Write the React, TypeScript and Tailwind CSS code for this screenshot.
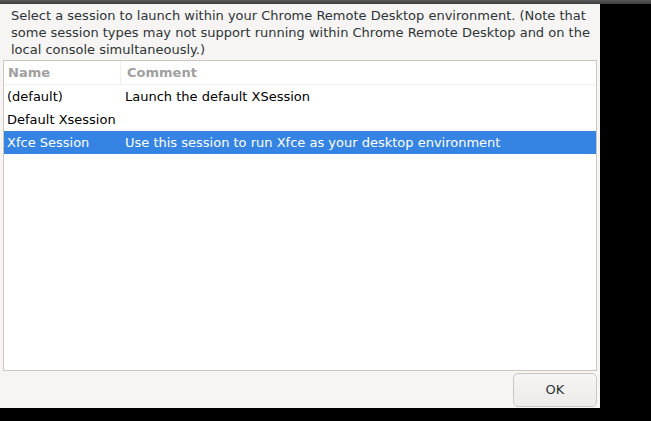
export default function App() {
  const rows = [
    { name: "(default)", comment: "Launch the default XSession", selected: false },
    { name: "Default Xsession", comment: "", selected: false },
    { name: "Xfce Session", comment: "Use this session to run Xfce as your desktop environment", selected: true },
  ];

  return (
    <div className="w-[651px] h-[421px] bg-black overflow-hidden flex flex-col font-['DejaVu_Sans',sans-serif] text-[13px] text-[#2e3436]">
      {/* title strip */}
      <div className="h-[4px] bg-gradient-to-b from-[#5a5a5a] to-[#3c3c3c] shrink-0" />
      <div className="w-[600px] h-[404px] bg-[#f6f5f4] flex flex-col">
        <p className="pl-[11px] pr-[2px] pt-[3px] leading-[17px] h-[56px] text-[#2e3436]">
          Select a session to launch within your Chrome Remote Desktop environment. (Note that some session types may not support running within Chrome Remote Desktop and on the local console simultaneously.)
        </p>
        <div className="mx-[3px] h-[311px] border border-[#cdc7c2] bg-white flex flex-col">
          <div className="flex h-[24px] items-center border-b border-[#f0efee] font-bold text-[#a0a0a0]">
            <div className="w-[117px] pl-[4px] h-full flex items-center border-r border-[#f0efee]">Name</div>
            <div className="pl-[6px]">Comment</div>
          </div>
          {rows.map((r) => (
            <div
              key={r.name}
              className={
                r.selected
                  ? "flex h-[23px] items-center bg-[#3584e4] text-white"
                  : "flex h-[23px] items-center text-black"
              }
            >
              <div className="w-[118px] pl-[3px] whitespace-nowrap">{r.name}</div>
              <div className="pl-[3px] whitespace-nowrap">{r.comment}</div>
            </div>
          ))}
        </div>
        <div className="flex justify-end pr-[3px] pt-[2px]">
          <button className="w-[84px] h-[34px] rounded-[5px] border border-[#cdc7c2] bg-gradient-to-b from-[#f6f5f4] to-[#edebe9] text-[#2e3436] text-[13px]">
            OK
          </button>
        </div>
      </div>
    </div>
  );
}
